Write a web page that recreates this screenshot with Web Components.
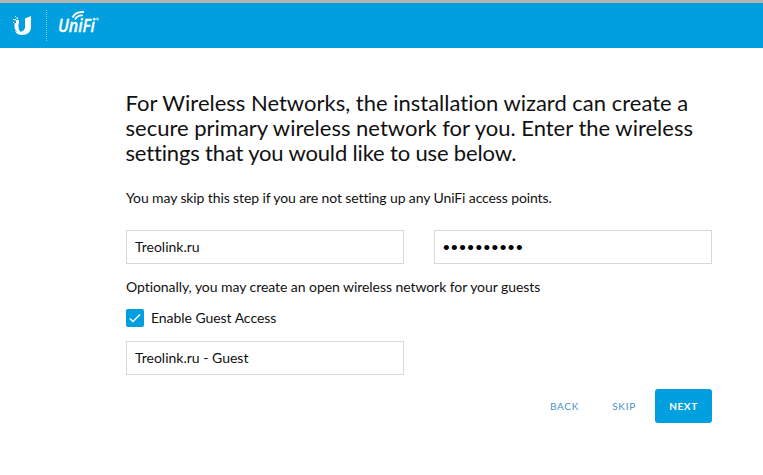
<!DOCTYPE html>
<html lang="en">
<head>
<meta charset="utf-8">
<title>UniFi Wizard</title>
<style>
body {
    margin: 0;
    background: #fff;
    color: #111;
    font: 14px/20px Lato, "Liberation Sans", sans-serif;
    font-variant-ligatures: none;
}
</style>
</head>
<body>
<unifi-wizard></unifi-wizard>

<script>
function define(name, html, setup) {
    const template = document.createElement('template');
    template.innerHTML = html;
    customElements.define(name, class extends HTMLElement {
        constructor() {
            super();
            this.attachShadow({ mode: 'open' });
            this.shadowRoot.appendChild(template.content.cloneNode(true));
        }
        connectedCallback() {
            if (setup) setup(this, this.shadowRoot);
        }
    });
}

define('unifi-header', `
<style>
:host {
    display: flex;
    box-sizing: border-box;
    height: 48px;
    border-top: 3px solid #b4b1ae;
    background: #009fdf;
    color: #fff;
}
.mark {
    width: 20px;
    height: 21px;
    margin: 12px 0 0 12px;
}
.divider {
    width: 0;
    height: 31px;
    margin: 7px 0 0 14px;
    border-left: 1px dotted #7fcdee;
}
.brand {
    width: 44px;
    height: 26px;
    margin: 7px 0 0 11px;
}
</style>
<svg class="mark" viewBox="0 0 20 21" fill="#fff">
    <path d="M4 5h2.500v7c0 3 1.500 5 4 5.800-.6.300-1 .5-2 .3C5 17.500 2.500 15 2.500 11.500V8H4z"/>
    <path d="M13 3.500 19 1v11c0 5-3.500 8-9 8-3.500 0-6-1.500-7.300-4.500 2 1.500 4.300 1.900 6.300 1.300 2.600-.7 4-2.300 4-4.800z"/>
    <path d="M3 1h1v1H3zM4.500 2.500H6V4H4.500zM1 4h1v1H1zM2.500 4H4v1.500H2.500zM6 5h1v4H6zM1 7h1v1H1z"/>
</svg>
<div class="divider"></div>
<svg class="brand" viewBox="0 0 44 26" fill="none" stroke="#fff">
    <text x="0" y="21.500" fill="#fff" stroke="#fff" stroke-width=".3" font-family="Open Sans, sans-serif" font-size="18" font-weight="600" font-style="italic" textLength="37" lengthAdjust="spacingAndGlyphs">UniFi</text>
    <path d="M14.500 7.500C16.500 3.500 20.500 1.500 26 2" stroke-width="2"/>
    <path d="M17 9.500c1.500-3 4-4.300 8-4" stroke-width="1.700"/>
    <circle cx="39.500" cy="9" r="1" stroke-width=".8"/>
</svg>
`);

define('wizard-field', `
<style>
:host {
    display: block;
    width: 278px;
}
input {
    display: block;
    box-sizing: border-box;
    width: 100%;
    height: 34px;
    margin: 0;
    padding: 0 8px 2px;
    border: 1px solid #d8d8d8;
    border-radius: 0;
    outline: none;
    background: #fff;
    color: #111;
    font: inherit;
    font-variant-ligatures: none;
}
input[type=password] {
    padding: 2px 8px 0;
    color: #000;
    font-family: "Liberation Sans", sans-serif;
    font-size: 19px;
    letter-spacing: 1.45px;
}
</style>
<input>
`, (host, root) => {
    const input = root.querySelector('input');
    input.type = host.getAttribute('type') || 'text';
    input.value = host.getAttribute('value');
});

define('wizard-checkbox', `
<style>
:host {
    display: flex;
    align-items: center;
    gap: 7px;
}
.box {
    width: 18px;
    height: 18px;
    border-radius: 2px;
    background: #009fdf;
}
span {
    letter-spacing: -.05px;
}
</style>
<svg class="box" viewBox="0 0 18 18" fill="none" stroke="#fff" stroke-width="1.500">
    <path d="M3.800 9.500 7 12.500l7-7"/>
</svg>
<span><slot></slot></span>
`);

define('wizard-button', `
<style>
:host {
    display: block;
}
button {
    display: block;
    height: 34px;
    padding: 0 14px;
    border: 0;
    border-radius: 3px;
    background: none;
    color: #4a90c8;
    font: 10px/34px Lato, sans-serif;
    letter-spacing: .75px;
    text-transform: uppercase;
}
:host([primary]) button {
    width: 57px;
    background: #009fdf;
    color: #fff;
    font-weight: 700;
    letter-spacing: .6px;
}
</style>
<button><slot></slot></button>
`);

define('unifi-wizard', `
<style>
:host {
    display: block;
}
main {
    width: 586px;
    margin-left: 126px;
    padding-top: 42px;
}
h1 {
    margin: 0 0 0 -.5px;
    font-size: 22px;
    line-height: 25px;
    font-weight: 400;
}
.tight {
    letter-spacing: -.16px;
}
p {
    margin: 0;
}
.intro {
    margin-top: 23px;
    letter-spacing: -.11px;
}
.row {
    display: flex;
    justify-content: space-between;
    margin-top: 22px;
}
.guest {
    margin: 13px 0 11px;
    letter-spacing: -.06px;
}
wizard-checkbox {
    margin-bottom: 13px;
}
footer {
    display: flex;
    justify-content: flex-end;
    gap: 5px;
    margin: 14px 0 0;
}
</style>
<unifi-header></unifi-header>
<main>
    <h1>For Wireless Networks, the installation wizard can create a secure primary wireless network for you. Enter the wireless <span class="tight">settings that you would like to use below.</span></h1>
    <p class="intro">You may skip this step if you are not setting up any UniFi access points.</p>
    <div class="row">
        <wizard-field value="Treolink.ru"></wizard-field>
        <wizard-field type="password" value="treolink12"></wizard-field>
    </div>
    <p class="guest">Optionally, you may create an open wireless network for your guests</p>
    <wizard-checkbox>Enable Guest Access</wizard-checkbox>
    <wizard-field value="Treolink.ru - Guest"></wizard-field>
    <footer>
        <wizard-button>Back</wizard-button>
        <wizard-button>Skip</wizard-button>
        <wizard-button primary>Next</wizard-button>
    </footer>
</main>
`);
</script>
</body>
</html>
